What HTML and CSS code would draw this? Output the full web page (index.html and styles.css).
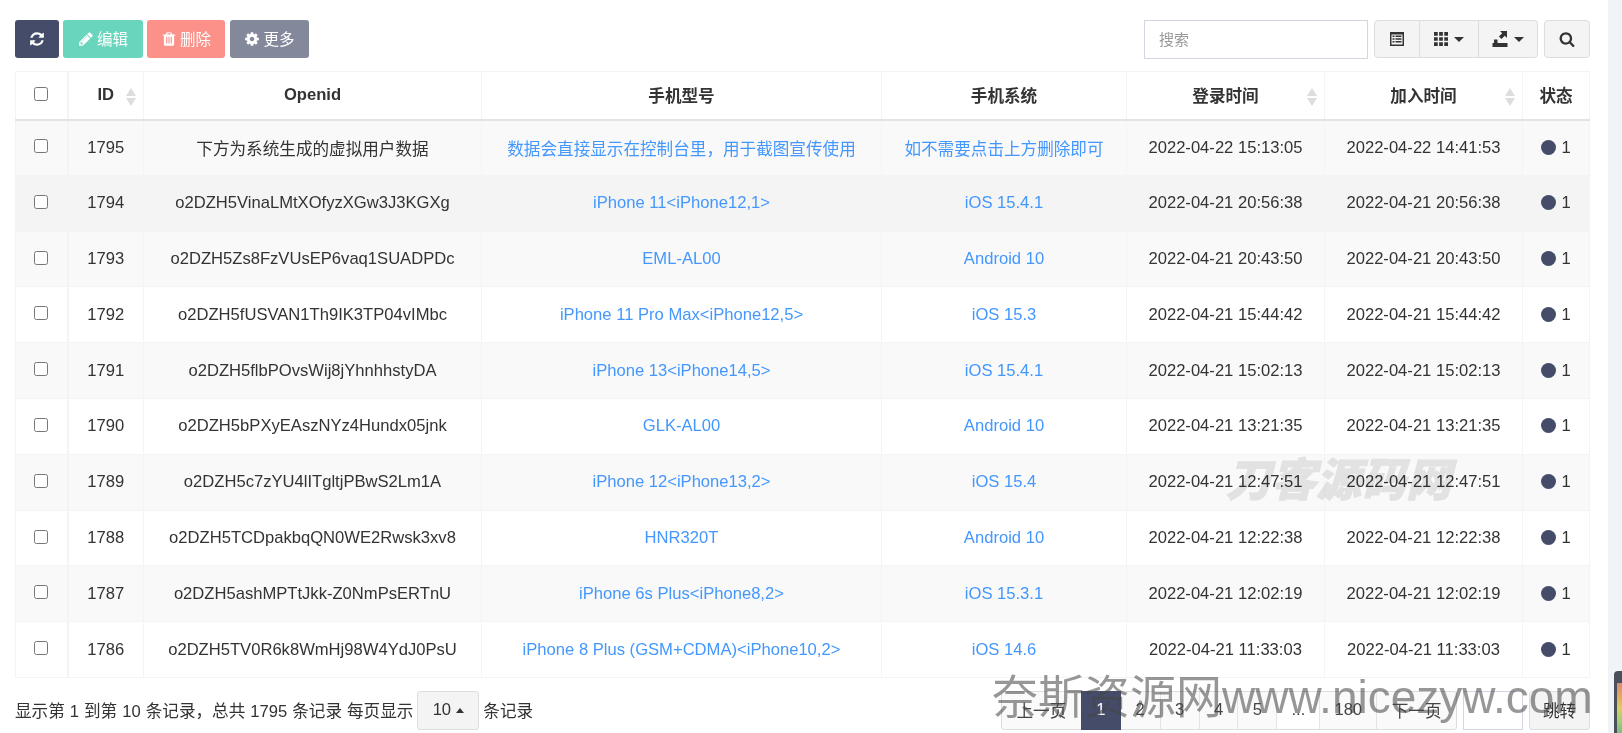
FILE: index.html
```html
<!DOCTYPE html>
<html lang="zh-CN">
<head>
  <meta charset="UTF-8">
  <meta name="viewport" content="width=device-width, initial-scale=1.0">
  <title>用户管理</title>
  <link rel="stylesheet" href="styles.css">
</head>
<body>
  <svg class="defs" width="0" height="0">
    <symbol id="i-refresh" viewBox="0 0 1792 1792"><path d="M1639 1056q0 5-1 7-64 268-268 434.500t-478 166.500q-146 0-282.500-55t-243.500-157l-129 129q-19 19-45 19t-45-19-19-45v-448q0-26 19-45t45-19h448q26 0 45 19t19 45-19 45l-137 137q71 66 161 102t187 36q134 0 250-65t186-179q11-17 53-117 8-23 30-23h192q13 0 22.500 9.500t9.500 22.500zm25-800v448q0 26-19 45t-45 19h-448q-26 0-45-19t-19-45 19-45l138-138q-148-137-349-137-134 0-250 65t-186 179q-11 17-53 117-8 23-30 23h-199q-13 0-22.500-9.500t-9.500-22.500v-7q65-268 270-434.500t480-166.500q146 0 284 55.500t245 156.500l130-129q19-19 45-19t45 19 19 45z"/></symbol>
    <symbol id="i-pencil" viewBox="0 0 1792 1792"><path d="M491 1536l91-91-235-235-91 91v107h128v128h107zm523-928q0-22-22-22-10 0-17 7l-542 542q-7 7-7 17 0 22 22 22 10 0 17-7l542-542q7-7 7-17zm-54-192l416 416-832 832h-416v-416zm683 96q0 53-37 90l-166 166-416-416 166-165q36-38 90-38 53 0 91 38l235 234q37 39 37 91z"/></symbol>
    <symbol id="i-trash" viewBox="0 0 1792 1792"><path d="M704 1376v-704q0-14-9-23t-23-9h-64q-14 0-23 9t-9 23v704q0 14 9 23t23 9h64q14 0 23-9t9-23zm256 0v-704q0-14-9-23t-23-9h-64q-14 0-23 9t-9 23v704q0 14 9 23t23 9h64q14 0 23-9t9-23zm256 0v-704q0-14-9-23t-23-9h-64q-14 0-23 9t-9 23v704q0 14 9 23t23 9h64q14 0 23-9t9-23zm-544-992h448l-48-117q-7-9-17-11h-317q-10 2-17 11zm928 32v64q0 14-9 23t-23 9h-96v948q0 83-47 143.500t-113 60.500h-832q-66 0-113-58.500t-47-141.500v-952h-96q-14 0-23-9t-9-23v-64q0-14 9-23t23-9h309l70-167q15-37 54-63t79-26h320q40 0 79 26t54 63l70 167h309q14 0 23 9t9 23z"/></symbol>
    <symbol id="i-cog" viewBox="0 0 1792 1792"><path d="M1152 896q0-106-75-181t-181-75-181 75-75 181 75 181 181 75 181-75 75-181zm512-109v222q0 12-8 23t-20 13l-185 28q-19 54-39 91 35 50 107 138 10 12 10 25t-9 23q-27 37-99 108t-94 71q-12 0-26-9l-138-108q-44 23-91 38-16 136-29 186-7 28-36 28h-222q-14 0-24.500-8.500t-11.500-21.500l-28-184q-49-16-90-37l-141 107q-10 9-25 9-14 0-25-11-126-114-165-168-7-10-7-23 0-12 8-23 15-21 51-66.500t54-70.500q-27-50-41-99l-183-27q-13-2-21-12.500t-8-23.500v-222q0-12 8-23t19-13l186-28q14-46 39-92-40-57-107-138-10-12-10-24 0-10 9-23 26-36 98.500-107.500t94.500-71.500q13 0 26 10l138 107q44-23 91-38 16-136 29-186 7-28 36-28h222q14 0 24.500 8.500t11.500 21.500l28 184q49 16 90 37l142-107q9-9 24-9 13 0 25 10 129 119 165 170 7 8 7 22 0 12-8 23-15 21-51 66.500t-54 70.500q26 50 41 98l183 28q13 2 21 12.500t8 23.500z"/></symbol>
    <symbol id="i-search" viewBox="0 0 1792 1792"><path d="M1216 832q0-185-131.500-316.500t-316.500-131.500-316.500 131.500-131.500 316.500 131.500 316.500 316.500 131.500 316.500-131.500 131.500-316.500zm512 832q0 52-38 90t-90 38q-54 0-90-38l-343-342q-179 124-399 124-143 0-273.500-55.500t-225-150-150-225-55.500-273.500 55.500-273.500 150-225 225-150 273.500-55.500 273.500 55.500 225 150 150 225 55.500 273.500q0 220-124 399l343 343q37 37 37 90z"/></symbol>
    <symbol id="i-list" viewBox="0 0 16 16"><path fill-rule="evenodd" d="M1 1h14v14H1zM2.500 3.500v10h11v-10z"/><path d="M3.500 4.500h2V6h-2zM6.500 4.500h6V6h-6zM3.500 7.200h2v1.500h-2zM6.500 7.200h6v1.500h-6zM3.500 10h2v1.500h-2zM6.500 10h6v1.500h-6z"/></symbol>
    <symbol id="i-th" viewBox="0 0 15 15"><path d="M0 0h4v4H0zM5.500 0h4v4h-4zM11 0h4v4h-4zM0 5.500h4v4H0zM5.500 5.500h4v4h-4zM11 5.500h4v4h-4zM0 11h4v4H0zM5.500 11h4v4h-4zM11 11h4v4h-4z"/></symbol>
    <symbol id="i-export" viewBox="0 0 15 16"><path d="M0 12h15v4H0zM1.500 8.500h3.500V12H1.500zM7.500 0h7v7l-2.200-2.200-3.300 3.300-2.600-2.600 3.300-3.300z"/></symbol>
  </svg>

  <div class="page">
    <div class="toolbar">
      <div class="actions">
        <button class="btn btn-dark"><svg class="icon"><use href="#i-refresh"/></svg></button>
        <button class="btn btn-green"><svg class="icon"><use href="#i-pencil"/></svg><span class="btn-text">编辑</span></button>
        <button class="btn btn-red"><svg class="icon"><use href="#i-trash"/></svg><span class="btn-text">删除</span></button>
        <button class="btn btn-gray"><svg class="icon"><use href="#i-cog"/></svg><span class="btn-text">更多</span></button>
      </div>
      <div class="tools">
        <input class="search-input" type="text" placeholder="搜索">
        <div class="tool-group">
          <button class="tool tool-list"><svg class="icon"><use href="#i-list"/></svg></button>
          <button class="tool tool-th"><svg class="icon icon-sm"><use href="#i-th"/></svg><span class="caret"></span></button>
          <button class="tool tool-export"><svg class="icon"><use href="#i-export"/></svg><span class="caret"></span></button>
        </div>
        <button class="tool tool-search"><svg class="icon"><use href="#i-search"/></svg></button>
      </div>
    </div>

    <table class="data-table">
      <colgroup>
        <col class="c-check"><col class="c-id"><col class="c-openid"><col class="c-model">
        <col class="c-system"><col class="c-login"><col class="c-join"><col class="c-status">
      </colgroup>
      <thead>
        <tr>
          <th><input type="checkbox"></th>
          <th class="sortable">ID</th>
          <th>Openid</th>
          <th>手机型号</th>
          <th>手机系统</th>
          <th class="sortable">登录时间</th>
          <th class="sortable">加入时间</th>
          <th>状态</th>
        </tr>
      </thead>
      <tbody id="rows"></tbody>
    </table>

    <div class="footer">
      <div class="page-info">
        <span>显示第 1 到第 10 条记录，总共 1795 条记录 每页显示</span>
        <button class="size-btn">10<span class="caret-up"></span></button>
        <span>条记录</span>
      </div>
      <div class="pager">
        <div class="pages">
          <a class="pg pg-wide">上一页</a>
          <a class="pg active">1</a>
          <a class="pg">2</a>
          <a class="pg">3</a>
          <a class="pg">4</a>
          <a class="pg">5</a>
          <a class="pg pg-dots">...</a>
          <a class="pg pg-mid">180</a>
          <a class="pg pg-wide">下一页</a>
        </div>
        <input class="jump-input" type="text">
        <button class="jump-btn">跳转</button>
      </div>
    </div>

    <div class="mark-light">刀客源码网</div>
    <div class="mark-dark">奈斯资源网www.nicezyw.com</div>
  </div>
  <div class="side"><div class="side-thumb"><div class="side-bars"></div></div></div>

  <script>
    // 表格数据
    const rows = [
      ['1795', '下方为系统生成的虚拟用户数据', '数据会直接显示在控制台里，用于截图宣传使用', '如不需要点击上方删除即可', '2022-04-22 15:13:05', '2022-04-22 14:41:53'],
      ['1794', 'o2DZH5VinaLMtXOfyzXGw3J3KGXg', 'iPhone 11<iPhone12,1>', 'iOS 15.4.1', '2022-04-21 20:56:38', '2022-04-21 20:56:38'],
      ['1793', 'o2DZH5Zs8FzVUsEP6vaq1SUADPDc', 'EML-AL00', 'Android 10', '2022-04-21 20:43:50', '2022-04-21 20:43:50'],
      ['1792', 'o2DZH5fUSVAN1Th9IK3TP04vIMbc', 'iPhone 11 Pro Max<iPhone12,5>', 'iOS 15.3', '2022-04-21 15:44:42', '2022-04-21 15:44:42'],
      ['1791', 'o2DZH5flbPOvsWij8jYhnhhstyDA', 'iPhone 13<iPhone14,5>', 'iOS 15.4.1', '2022-04-21 15:02:13', '2022-04-21 15:02:13'],
      ['1790', 'o2DZH5bPXyEAszNYz4Hundx05jnk', 'GLK-AL00', 'Android 10', '2022-04-21 13:21:35', '2022-04-21 13:21:35'],
      ['1789', 'o2DZH5c7zYU4lITgltjPBwS2Lm1A', 'iPhone 12<iPhone13,2>', 'iOS 15.4', '2022-04-21 12:47:51', '2022-04-21 12:47:51'],
      ['1788', 'o2DZH5TCDpakbqQN0WE2Rwsk3xv8', 'HNR320T', 'Android 10', '2022-04-21 12:22:38', '2022-04-21 12:22:38'],
      ['1787', 'o2DZH5ashMPTtJkk-Z0NmPsERTnU', 'iPhone 6s Plus<iPhone8,2>', 'iOS 15.3.1', '2022-04-21 12:02:19', '2022-04-21 12:02:19'],
      ['1786', 'o2DZH5TV0R6k8WmHj98W4YdJ0PsU', 'iPhone 8 Plus (GSM+CDMA)<iPhone10,2>', 'iOS 14.6', '2022-04-21 11:33:03', '2022-04-21 11:33:03']
    ];

    const tbody = document.getElementById('rows');
    rows.forEach(row => {
      const tr = document.createElement('tr');
      tr.innerHTML = '<td><input type="checkbox"></td>';
      row.forEach((text, i) => {
        const td = document.createElement('td');
        td.textContent = text;
        if (i === 2 || i === 3) td.className = 'link';
        tr.appendChild(td);
      });
      tr.insertAdjacentHTML('beforeend', '<td><span class="dot"></span>1</td>');
      tbody.appendChild(tr);
    });
  </script>
</body>
</html>
```

FILE: styles.css
```css
* {
  box-sizing: border-box;
}
html, body {
  height: 100%;
}
body {
  margin: 0;
  display: flex;
  overflow: hidden;
  background-color: #fff;
  color: #333;
  font-family: "Liberation Sans", "Noto Sans CJK SC", sans-serif;
  font-size: 16.6px;
}
.defs {
  position: absolute;
}
.page {
  position: relative;
  width: 1608px;
  padding: 20px 18px 0 15px;
}
.side {
  flex: 1;
  position: relative;
  background-color: #f1f4f6;
}
.side-thumb {
  position: absolute;
  left: 6px;
  top: 671px;
  width: 8px;
  height: 62px;
  border-radius: 4px 0 0 0;
  background-color: #4a4f5c;
}
.side-bars {
  position: absolute;
  left: 3px;
  top: 12px;
  right: 0;
  bottom: 0;
  background: linear-gradient(#d98a7c, #e0a860 25%, #d9cf62 50%, #a8cf70 75%, #7fb88a);
}
.icon {
  width: 16px;
  height: 16px;
  fill: currentColor;
  flex: none;
}
.icon-sm {
  width: 14px;
  height: 14px;
}

/* 工具栏 */
.toolbar {
  display: flex;
  justify-content: space-between;
  height: 38px;
}
.actions, .tools, .tool-group {
  display: flex;
}
.actions {
  gap: 4px;
}
.btn {
  display: flex;
  align-items: center;
  justify-content: center;
  gap: 3px;
  height: 38px;
  padding: 0;
  border: 0;
  border-radius: 3px;
  color: #fff;
  font: inherit;
  font-size: 15.500px;
}
.btn-text {
  margin-bottom: 3px;
}
.btn-dark { width: 44px; background-color: #444c69; }
.btn-green { width: 80px; background-color: #68d5bc; }
.btn-red { width: 78px; margin-right: 1px; background-color: #fb9188; }
.btn-gray { width: 79px; background-color: #84889b; }
.search-input {
  width: 224px;
  height: 39px;
  margin-right: 6px;
  padding: 0 14px;
  border: 1px solid #d2d6e3;
  outline: none;
  font: inherit;
  font-size: 15px;
}
.search-input::placeholder {
  color: #999;
}
.tool-group {
  margin-right: 6px;
}
.tool {
  display: flex;
  align-items: center;
  justify-content: center;
  gap: 6px;
  height: 38px;
  padding: 0;
  border: 1px solid #ddd;
  background-color: #f4f4f4;
  color: #333;
}
.tool-list {
  width: 46px;
  border-radius: 4px 0 0 4px;
}
.tool-th {
  width: 59px;
  border-left: 0;
}
.tool-export {
  width: 59px;
  border-left: 0;
  border-radius: 0 4px 4px 0;
}
.tool-search {
  width: 46px;
  border-radius: 4px;
}
.caret {
  width: 0;
  height: 0;
  border-top: 5px solid #333;
  border-left: 5px solid transparent;
  border-right: 5px solid transparent;
}

/* 表格 */
.data-table {
  width: 1574px;
  margin-top: 13px;
  table-layout: fixed;
  border-collapse: collapse;
  border: 1px solid #f4f4f4;
}
.c-check { width: 52px; }
.c-id { width: 76px; }
.c-openid { width: 338px; }
.c-model { width: 400px; }
.c-system { width: 245px; }
.c-login { width: 198px; }
.c-join { width: 198px; }
.c-status { width: 67px; }
th, td {
  padding: 0;
  border: 1px solid #f4f4f4;
  text-align: center;
  font-weight: normal;
}
th:first-child, td:first-child {
  border-right-width: 2px;
}
th {
  height: 48px;
  border-bottom: 2px solid #e3e3e3;
  color: #333;
  font-size: 16.6px;
  font-weight: bold;
}
td {
  height: 55.800px;
  white-space: nowrap;
}
th input, td input {
  width: 14px;
  height: 14px;
  margin: 0 0 4px;
  vertical-align: middle;
}
.sortable {
  position: relative;
}
.sortable::before, .sortable::after {
  content: "";
  position: absolute;
  right: 7px;
  width: 0;
  height: 0;
  border-left: 5px solid transparent;
  border-right: 5px solid transparent;
}
.sortable::before {
  top: 16px;
  border-bottom: 8px solid #ddd;
}
.sortable::after {
  top: 26px;
  border-top: 8px solid #ddd;
}
tbody tr:nth-child(odd) {
  background-color: #f9f9f9;
}
tbody tr:nth-child(2) {
  background-color: #f4f4f4;
}
.link {
  color: #4397fd;
}
.dot {
  display: inline-block;
  width: 15px;
  height: 15px;
  margin-right: 5px;
  border-radius: 50%;
  background-color: #444c69;
  vertical-align: -2px;
}

/* 底部 */
.footer {
  display: flex;
  justify-content: space-between;
  margin-top: 13px;
}
.page-info {
  display: flex;
  align-items: center;
  gap: 4px;
  height: 39px;
  word-spacing: 0.4px;
}
.size-btn {
  display: flex;
  align-items: center;
  justify-content: center;
  gap: 5px;
  width: 62px;
  height: 39px;
  padding: 0;
  border: 1px solid #ddd;
  border-radius: 3px;
  background-color: #f4f4f4;
  color: #333;
  font: inherit;
}
.caret-up {
  width: 0;
  height: 0;
  border-bottom: 5px solid #333;
  border-left: 4px solid transparent;
  border-right: 4px solid transparent;
}
.pager {
  display: flex;
  align-items: stretch;
  height: 39px;
}
.pages {
  display: flex;
  width: 456px;
  margin-right: 6px;
  border: 1px solid #ddd;
  border-radius: 3px;
  background-color: #fafafa;
}
.pg {
  display: flex;
  align-items: center;
  justify-content: center;
  width: 39px;
  border-left: 1px solid #e4e4e4;
  color: #444;
}
.pg-wide { width: 79px; border-left: 0; }
.pg-wide:last-child { width: 80px; border-left: 1px solid #e4e4e4; }
.pg-dots { width: 43px; background-color: #fff; }
.pg-mid { width: 57px; }
.active {
  width: 40px;
  margin-top: -1px;
  margin-bottom: -1px;
  border: 0;
  background-color: #444c69;
  color: #fff;
}
.active + .pg {
  border-left: 0;
}
.jump-input {
  width: 60px;
  margin-right: 6px;
  border: 1px solid #d2d6e3;
  outline: none;
}
.jump-btn {
  width: 61px;
  padding: 0;
  border: 1px solid #ddd;
  border-radius: 3px;
  background-color: #f4f4f4;
  color: #333;
  font: inherit;
}

/* 水印 */
.mark-light {
  position: absolute;
  left: 1226px;
  top: 444px;
  color: #e8e8e8;
  mix-blend-mode: multiply;
  -webkit-text-stroke: 1px #e8e8e8;
  font-size: 45px;
  font-weight: 900;
  font-style: italic;
  white-space: nowrap;
}
.mark-dark {
  position: absolute;
  left: 992px;
  top: 660px;
  color: rgba(70, 70, 70, 0.56);
  font-size: 46px;
  white-space: nowrap;
}
```
